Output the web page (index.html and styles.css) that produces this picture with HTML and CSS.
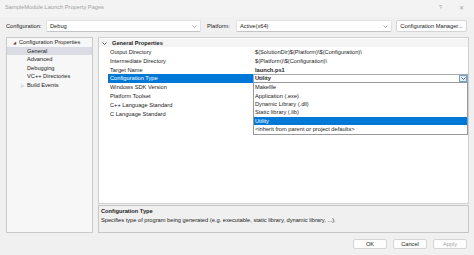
FILE: index.html
```html
<!DOCTYPE html>
<html lang="en">
<head>
  <meta charset="UTF-8" />
  <title>SampleModule.Launch Property Pages</title>
  <link rel="stylesheet" href="styles.css">
</head>
<body>
  <div class="window">
    <div class="titlebar">
      <span class="title">SampleModule.Launch Property Pages</span>
      <span class="caption-btns"><span>?</span><span class="close">&#x2715;</span></span>
    </div>

    <div class="toolbar">
      <span class="label label-config">Configuration:</span>
      <div class="combo combo-config">
        <span>Debug</span>
        <svg class="chev" width="5" height="3" viewBox="0 0 5 3"><path d="M0.5 0.5 L2.5 2.5 L4.5 0.5" fill="none" stroke="#888" stroke-width="0.7"/></svg>
      </div>
      <span class="label label-platform">Platform:</span>
      <div class="combo combo-platform">
        <span>Active(x64)</span>
        <svg class="chev" width="5" height="3" viewBox="0 0 5 3"><path d="M0.5 0.5 L2.5 2.5 L4.5 0.5" fill="none" stroke="#888" stroke-width="0.7"/></svg>
      </div>
      <button class="btn btn-manager">Configuration Manager...</button>
    </div>

    <div class="main">
      <ul class="tree">
        <li class="node"><span class="twisty open">&#x25E2;</span>Configuration Properties</li>
        <li class="leaf selected">General</li>
        <li class="leaf">Advanced</li>
        <li class="leaf">Debugging</li>
        <li class="leaf">VC++ Directories</li>
        <li class="leaf"><span class="twisty closed">&#x25B7;</span>Build Events</li>
      </ul>

      <div class="right">
        <div class="grid">
          <div class="category">
            <svg class="cat-chev" width="5" height="3" viewBox="0 0 5 3"><path d="M0.5 0.5 L2.5 2.5 L4.5 0.5" fill="none" stroke="#333" stroke-width="0.8"/></svg>
            <span>General Properties</span>
          </div>
          <div class="prop"><span class="name">Output Directory</span><span class="value">$(SolutionDir)$(Platform)\$(Configuration)\</span></div>
          <div class="prop"><span class="name">Intermediate Directory</span><span class="value">$(Platform)\$(Configuration)\</span></div>
          <div class="prop"><span class="name">Target Name</span><span class="value bold">launch.ps1</span></div>
          <div class="prop active">
            <span class="name">Configuration Type</span>
            <span class="value bold editor">
              Utility
              <span class="drop-btn"><svg width="5" height="3" viewBox="0 0 5 3"><path d="M0.5 0.5 L2.5 2.5 L4.5 0.5" fill="none" stroke="#333" stroke-width="0.7"/></svg></span>
              <ul class="droplist">
                <li>Makefile</li>
                <li>Application (.exe)</li>
                <li>Dynamic Library (.dll)</li>
                <li>Static library (.lib)</li>
                <li class="picked">Utility</li>
                <li>&lt;inherit from parent or project defaults&gt;</li>
              </ul>
            </span>
          </div>
          <div class="prop"><span class="name">Windows SDK Version</span><span class="value"></span></div>
          <div class="prop"><span class="name">Platform Toolset</span><span class="value"></span></div>
          <div class="prop"><span class="name">C++ Language Standard</span><span class="value"></span></div>
          <div class="prop"><span class="name">C Language Standard</span><span class="value"></span></div>
        </div>
        <div class="desc">
          <div class="desc-title">Configuration Type</div>
          <div>Specifies type of program being generated (e.g. executable, static library, dynamic library, ...).</div>
        </div>
      </div>
    </div>

    <div class="footer">
      <button class="btn">OK</button>
      <button class="btn">Cancel</button>
      <button class="btn disabled">Apply</button>
    </div>
  </div>
</body>
</html>
```

FILE: styles.css
```css
* {
  box-sizing: border-box;
}
body {
  margin: 0;
  font-family: "Liberation Sans", Arial, sans-serif;
  font-size: 5.7px;
  color: #1b1b1b;
  background: #f0f0f0;
}
ul {
  list-style: none;
  margin: 0;
  padding: 0;
}
.window {
  width: 474px;
  height: 255px;
  display: flex;
  flex-direction: column;
  background: #f0f0f0;
  overflow: hidden;
}

/* title bar */
.titlebar {
  height: 17px;
  padding: 0 10px 3px 5px;
  display: flex;
  align-items: center;
  justify-content: space-between;
  background: #f3f3f3;
  color: #a2a2a2;
}
.caption-btns {
  display: flex;
  gap: 17px;
  font-size: 6px;
}

/* configuration / platform bar */
.toolbar {
  height: 20px;
  padding: 3px 0 0 6px;
  display: flex;
  align-items: flex-start;
}
.label {
  height: 12px;
  line-height: 12px;
}
.label-config {
  width: 40px;
}
.label-platform {
  width: 29px;
}
.combo {
  height: 12px;
  padding: 0 3px;
  display: flex;
  align-items: center;
  justify-content: space-between;
  background: #fff;
  border: 1px solid #e2e2e2;
  border-bottom-color: #c4c4c4;
  border-radius: 2px;
}
.combo-config {
  width: 155px;
  margin-right: 6px;
}
.combo-platform {
  width: 156px;
  margin-right: 4px;
}
.btn {
  font-family: inherit;
  font-size: 5.7px;
  color: #1b1b1b;
  height: 12px;
  padding: 0;
  background: #fdfdfd;
  border: 1px solid #d5d5d5;
  border-radius: 2px;
}
.btn-manager {
  width: 71px;
}

/* main area */
.main {
  height: 196px;
  padding: 0 5px 0 6px;
  display: flex;
  gap: 5px;
}
.tree {
  width: 87px;
  background: #f7f7f7;
  border: 1px solid #c9c9c9;
}
.tree li {
  height: 8.5px;
  line-height: 8.5px;
  white-space: nowrap;
}
.tree .node {
  padding-left: 6px;
}
.tree .leaf {
  padding-left: 20px;
}
.tree .selected {
  background: #dadbe3;
}
.twisty {
  display: inline-block;
  width: 6px;
  font-size: 4px;
  color: #444;
}
.twisty.closed {
  width: 6px;
  margin-left: -6px;
  color: #666;
}

.right {
  flex: 1;
  display: flex;
  flex-direction: column;
  gap: 1px;
}
.grid {
  height: 168px;
  background: #fff;
  border: 1px solid #cfcfcf;
  padding-top: 1px;
}
.category {
  height: 8px;
  margin-bottom: 1px;
  display: flex;
  align-items: center;
  gap: 5px;
  padding-left: 3px;
  background: #f4f4f4;
  font-weight: bold;
}
.prop {
  height: 8.8px;
  line-height: 8.8px;
  display: flex;
  padding-left: 9px;
  white-space: nowrap;
}
.prop .name {
  width: 145px;
  padding-left: 2px;
}
.prop .value {
  flex: 1;
  padding-left: 2px;
}
.bold {
  font-weight: bold;
}
.prop.active .name {
  background: #0078d7;
  color: #fff;
}
.editor {
  position: relative;
  border: 1px solid #a9a9a9;
  line-height: 7px;
  padding-left: 1px !important;
}
.drop-btn {
  position: absolute;
  right: 0;
  top: 0;
  width: 8px;
  height: 7px;
  display: flex;
  align-items: center;
  justify-content: center;
  background: #e2eefa;
  border: 1px solid #6e9fd6;
}
.droplist {
  position: absolute;
  left: -1px;
  right: -1px;
  top: 100%;
  height: 53px;
  background: #fff;
  border: 1px solid #999;
  font-weight: normal;
}
.droplist li {
  height: 8.4px;
  line-height: 8.4px;
  padding-left: 1px;
}
.droplist .picked {
  background: #0078d7;
  color: #fff;
}

.desc {
  height: 28px;
  padding: 1px 2px;
  background: #f0f0f0;
  border: 1px solid #c6c6c6;
  line-height: 9px;
}
.desc-title {
  font-weight: bold;
}

/* dialog buttons */
.footer {
  flex: 1;
  display: flex;
  justify-content: flex-end;
  align-items: flex-start;
  gap: 6px;
  padding: 6px 7px 0 0;
}
.footer .btn {
  width: 34px;
  height: 10px;
}
.footer .btn.disabled {
  color: #a8a8a8;
}
```
